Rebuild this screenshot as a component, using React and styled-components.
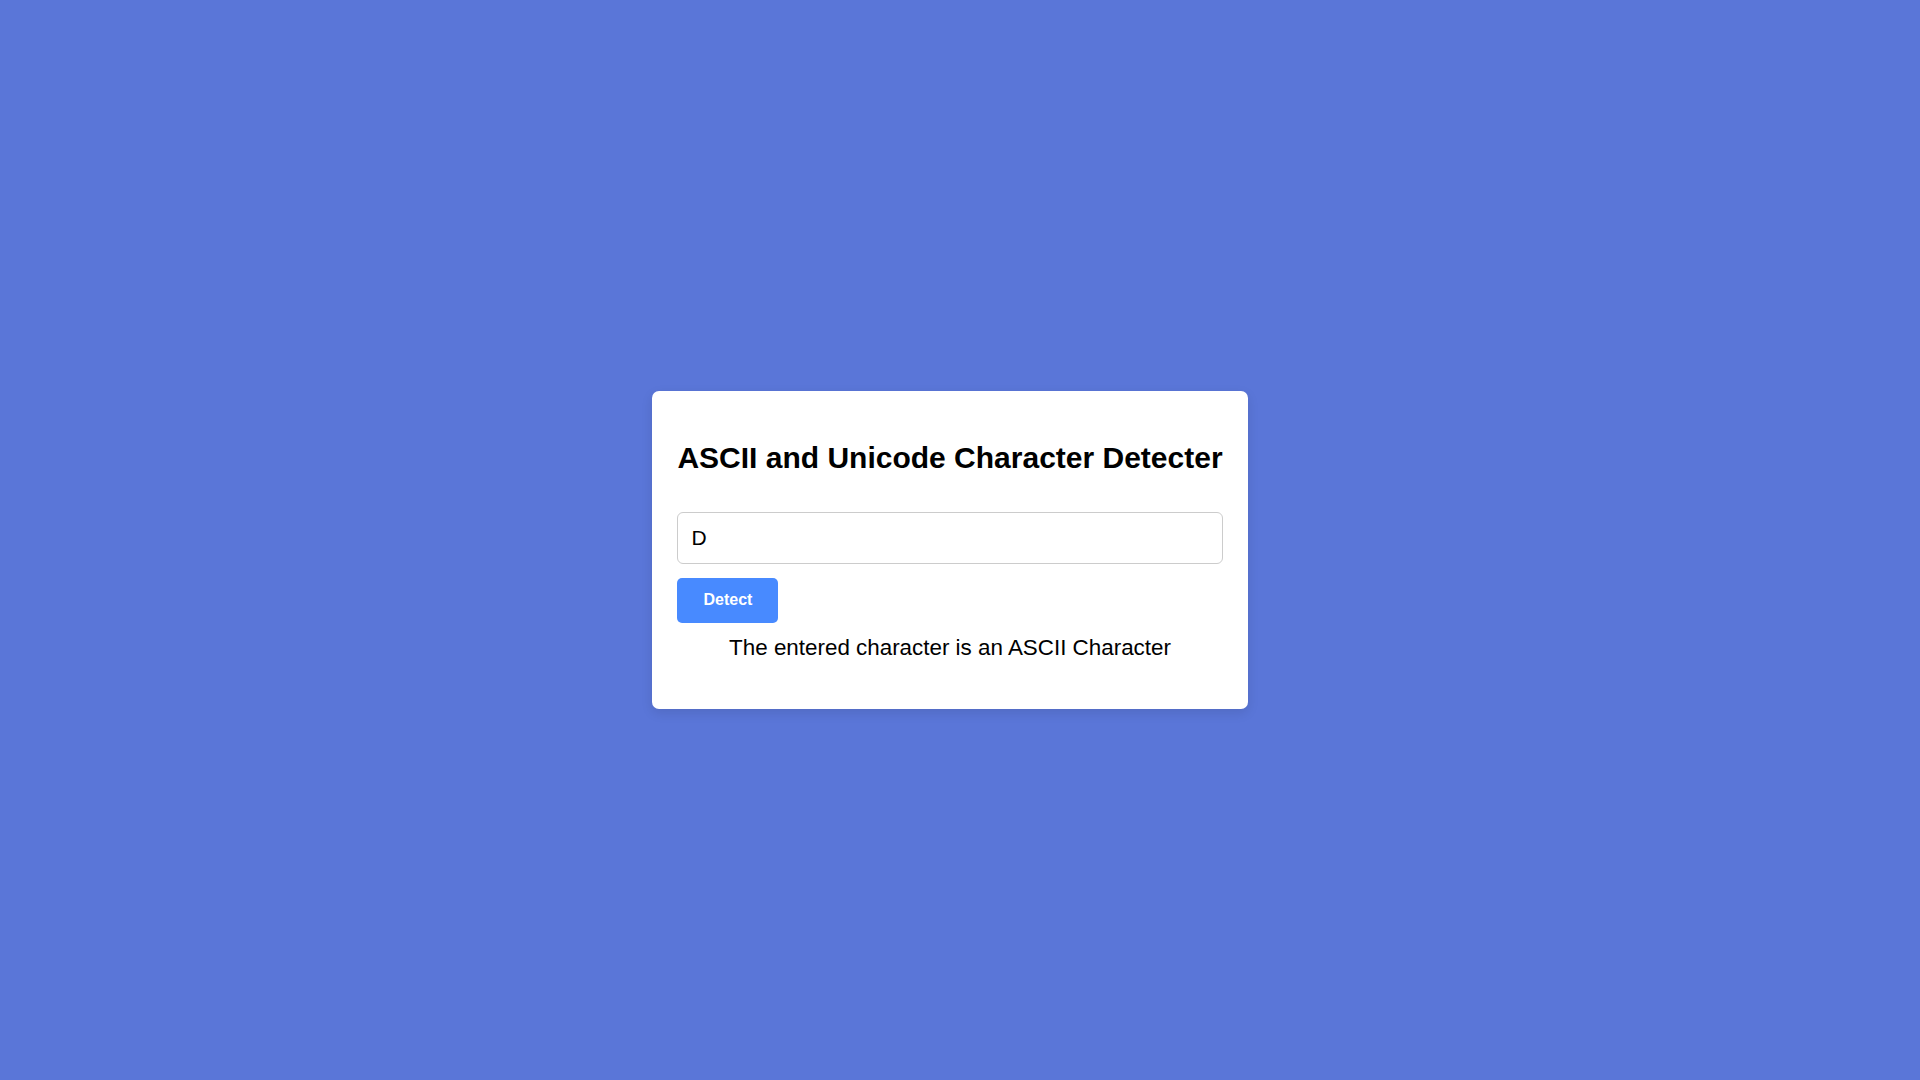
import { useState } from "react";
import styled, { createGlobalStyle } from "styled-components";

const GlobalStyle = createGlobalStyle`
  body {
    background: #5a76d8;
    font-family: "Liberation Sans", Arial, sans-serif;
  }
`;

function App() {
  const [value, setValue] = useState("D");
  const [result, setResult] = useState("The entered character is an ASCII Character");

  const detect = () => {
    if (!value) return setResult("");
    const code = value.charCodeAt(0);
    setResult(
      code <= 127
        ? "The entered character is an ASCII Character"
        : "The entered character is a Unicode Character"
    );
  };

  return (
    <Page>
      <GlobalStyle />
      <Card>
        <Title>ASCII and Unicode Character Detecter</Title>
        <CharInput
          type="text"
          maxLength={1}
          value={value}
          onChange={(e) => setValue(e.target.value)}
        />
        <DetectButton onClick={detect}>Detect</DetectButton>
        <Result>{result}</Result>
      </Card>
    </Page>
  );
}

// room on the right stands in for the browser's scrollbar
const Page = styled.div`
  box-sizing: border-box;
  display: flex;
  align-items: center;
  justify-content: center;
  height: 100vh;
  padding: 3px 20px 0 0;
`;

const Card = styled.div`
  background: #fff;
  padding: 25px;
  border-radius: 7px;
  box-shadow: 0 4px 12px rgba(0, 0, 0, 0.1);
`;

const Title = styled.h2`
  margin: 25px 0 37px;
  font-size: 30px;
  font-weight: bold;
  color: #000;
  white-space: nowrap;
`;

const CharInput = styled.input`
  display: block;
  box-sizing: border-box;
  width: 100%;
  height: 52px;
  padding: 0 13px;
  border: 1px solid #ccc;
  border-radius: 6px;
  font-family: "Liberation Sans", Arial, sans-serif;
  font-size: 21px;
  color: #000;
  outline: none;
`;

const DetectButton = styled.button`
  display: block;
  margin-top: 14px;
  box-sizing: border-box;
  width: 101px;
  height: 45px;
  border: none;
  border-radius: 5px;
  background: #488aff;
  color: #fff;
  font-family: "Liberation Sans", Arial, sans-serif;
  font-size: 16px;
  font-weight: bold;
  cursor: pointer;
`;

const Result = styled.p`
  margin: 12px 0 23px;
  text-align: center;
  font-size: 22.4px;
  color: #000;
`;

export default App;
